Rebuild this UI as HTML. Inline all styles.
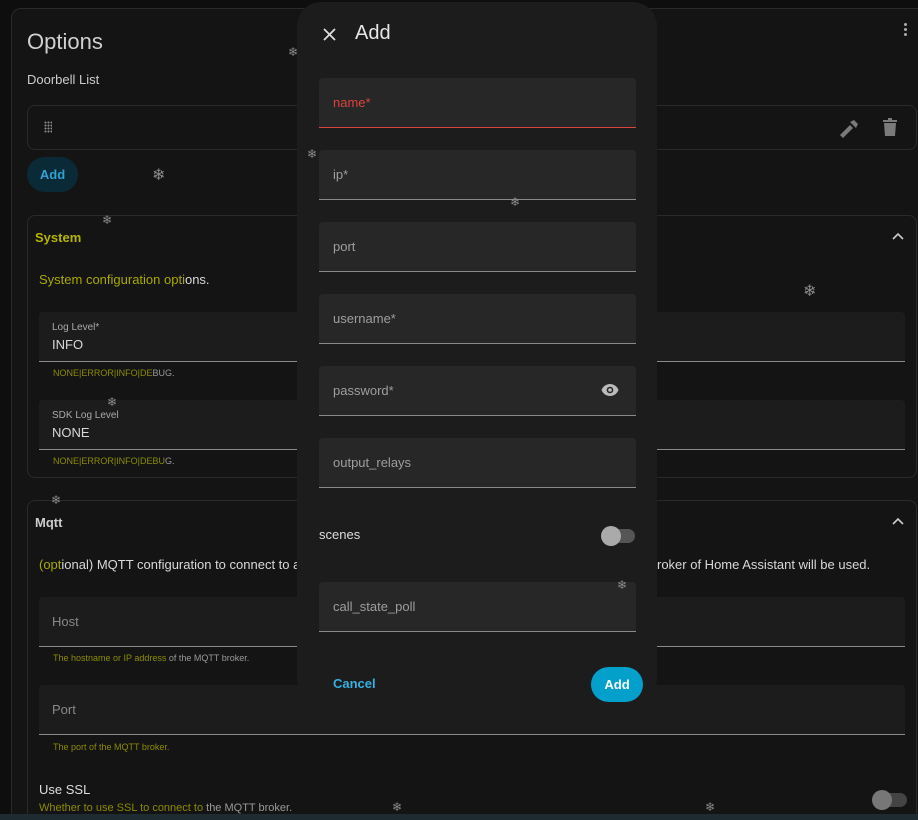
<!DOCTYPE html>
<html style="overflow:hidden;width:918px;height:820px"><head><meta charset="utf-8"><style>
*{box-sizing:border-box;margin:0;padding:0}
body{width:918px;height:820px;background:#0e0e0e;font-family:"Liberation Sans",sans-serif;position:relative;overflow:hidden;color:#d8d8d8}
.a{position:absolute}
.card{left:11px;top:8px;width:920px;height:830px;background:#141414;border:1px solid #2a2a2a;border-radius:10px}
.box{border:1px solid #2a2a2a;border-radius:8px}
.fld{background:#1c1c1c;border-bottom:1px solid #8a8a8a;border-radius:4px 4px 0 0}
.dlg{left:297px;top:2px;width:360px;height:700px;background:#1c1c1c;border-radius:24px}
.df{left:22px;width:317px;height:50px;background:#272727;border-bottom:1px solid #8a8a8a;border-radius:4px 4px 0 0}
.df span{position:absolute;left:14px;top:17px;font-size:13px;color:#9e9e9e}
.ol{color:#8b8b00}
.sn{color:#8a8a8a;font-size:12px}
</style></head><body>
<div class="a card"></div>
<div class="a" style="left:27px;top:29px;font-size:22px;color:#d0d0d0">Options</div>
<div class="a" style="left:27px;top:72px;font-size:13px;color:#ccc">Doorbell List</div>
<div class="a box" style="left:27px;top:105px;width:890px;height:45px"></div>
<div class="a" style="left:44px;top:121px;width:8px;height:12px;background:radial-gradient(circle,#888 0.8px,transparent 1.2px) 0 0/3px 3px"></div>
<svg class="a" style="left:838px;top:118px" width="22" height="20" viewBox="0 0 22 20"><path d="M2 17 L12 7 L15 10 L5 20Z M12 4 L18 10 L20 6 L16 2Z" fill="#7a7a7a"/></svg>
<svg class="a" style="left:882px;top:118px" width="16" height="18" viewBox="0 0 16 18"><path d="M1 2h14v2H1z M6 0h4v2H6z M2 5h12l-1 13H3z" fill="#7a7a7a"/></svg>
<div class="a" style="left:27px;top:157px;width:51px;height:35px;border-radius:18px;background:#0a2a38;color:#2ea3d0;font-size:13px;font-weight:bold;text-align:center;line-height:35px">Add</div>
<div class="a" style="left:904px;top:23px;width:3px;height:3px;background:#aaa;border-radius:50%;box-shadow:0 5px 0 #aaa,0 10px 0 #aaa"></div>

<div class="a box" style="left:27px;top:215px;width:890px;height:263px"></div>
<div class="a ol" style="left:35px;top:230px;font-size:13px;font-weight:bold;color:#b5b500">System</div>
<svg class="a" style="left:892px;top:232px" width="12" height="8"><path d="M1 7 L6 2 L11 7" stroke="#ccc" stroke-width="1.6" fill="none"/></svg>
<div class="a" style="left:39px;top:272px;font-size:13px"><span class="ol" style="color:#a8a800">System configuration opti</span>ons.</div>
<div class="a fld" style="left:39px;top:312px;width:866px;height:50px"></div>
<div class="a" style="left:52px;top:322px;font-size:10px;color:#aaa">Log Level*</div>
<div class="a" style="left:52px;top:337px;font-size:13px">INFO</div>
<div class="a" style="left:53px;top:368px;font-size:9px;color:#999"><span class="ol">NONE|ERROR|INFO|DE</span>BUG.</div>
<div class="a fld" style="left:39px;top:400px;width:866px;height:50px"></div>
<div class="a" style="left:52px;top:410px;font-size:10px;color:#aaa">SDK Log Level</div>
<div class="a" style="left:52px;top:425px;font-size:13px">NONE</div>
<div class="a" style="left:53px;top:456px;font-size:9px;color:#999"><span class="ol">NONE|ERROR|INFO|DEBU</span>G.</div>

<div class="a box" style="left:27px;top:500px;width:890px;height:340px"></div>
<div class="a" style="left:35px;top:515px;font-size:13px;font-weight:bold;color:#ccc">Mqtt</div>
<svg class="a" style="left:892px;top:517px" width="12" height="8"><path d="M1 7 L6 2 L11 7" stroke="#ccc" stroke-width="1.6" fill="none"/></svg>
<div class="a" style="left:39px;top:557px;font-size:13px"><span class="ol" style="color:#a8a800">(opt</span>ional) MQTT configuration to connect to an</div>
<div class="a" style="left:657px;top:557px;font-size:13px">roker of Home Assistant will be used.</div>
<div class="a fld" style="left:39px;top:597px;width:866px;height:50px"></div>
<div class="a" style="left:52px;top:614px;font-size:13px;color:#888">Host</div>
<div class="a" style="left:53px;top:653px;font-size:9px;color:#999"><span class="ol">The hostname or IP address</span> of the MQTT broker.</div>
<div class="a fld" style="left:39px;top:685px;width:866px;height:50px"></div>
<div class="a" style="left:52px;top:702px;font-size:13px;color:#888">Port</div>
<div class="a" style="left:53px;top:742px;font-size:9px;color:#8b8b00">The port of the MQTT broker.</div>
<div class="a" style="left:39px;top:782px;font-size:13px;color:#ddd">Use SSL</div>
<div class="a" style="left:39px;top:802px;font-size:11px;color:#999"><span class="ol">Whether to use SSL to connect to</span> the MQTT broker.</div>
<div class="a" style="left:877px;top:793px;width:30px;height:14px;border-radius:7px;background:#444"></div>
<div class="a" style="left:872px;top:790px;width:20px;height:20px;border-radius:50%;background:#777"></div>
<div class="a" style="left:0;top:814px;width:918px;height:6px;background:#1e2b31"></div>

<div class="a dlg">
<svg class="a" style="left:26px;top:26px" width="13" height="13"><path d="M1 1L12 12M12 1L1 12" stroke="#ddd" stroke-width="1.8"/></svg>
<div class="a" style="left:58px;top:20px;font-size:20px;color:#e6e6e6">Add</div>
<div class="a df" style="top:76px;border-bottom-color:#d9443b"><span style="color:#d9443b">name*</span></div>
<div class="a df" style="top:148px"><span>ip*</span></div>
<div class="a df" style="top:220px"><span>port</span></div>
<div class="a df" style="top:292px"><span>username*</span></div>
<div class="a df" style="top:364px"><span>password*</span>
<svg class="a" style="left:282px;top:18px" width="18" height="12" viewBox="0 0 18 12"><path d="M9 0C5 0 1.8 2.5 0.5 6C1.8 9.5 5 12 9 12S16.2 9.5 17.5 6C16.2 2.5 13 0 9 0Z" fill="#bbb"/><circle cx="9" cy="6" r="3.3" fill="#272727"/><circle cx="9" cy="6" r="1.8" fill="#bbb"/></svg></div>
<div class="a df" style="top:436px"><span>output_relays</span></div>
<div class="a" style="left:22px;top:525px;font-size:13px;color:#ddd">scenes</div>
<div class="a" style="left:308px;top:527px;width:30px;height:14px;border-radius:7px;background:#555"></div>
<div class="a" style="left:304px;top:524px;width:20px;height:20px;border-radius:50%;background:#aaa"></div>
<div class="a df" style="top:580px"><span>call_state_poll</span></div>
<div class="a" style="left:36px;top:674px;font-size:13px;font-weight:bold;color:#35b0e0">Cancel</div>
<div class="a" style="left:294px;top:665px;width:52px;height:35px;border-radius:18px;background:#03a0cc;color:#fff;font-size:13px;font-weight:bold;text-align:center;line-height:35px">Add</div>
</div>
<div class="a sn" style="left:288px;top:45px">❄</div>
<div class="a sn" style="left:152px;top:165px;font-size:16px">❄</div>
<div class="a sn" style="left:102px;top:213px">❄</div>
<div class="a sn" style="left:307px;top:147px">❄</div>
<div class="a sn" style="left:510px;top:195px">❄</div>
<div class="a sn" style="left:803px;top:281px;font-size:16px">❄</div>
<div class="a sn" style="left:107px;top:395px">❄</div>
<div class="a sn" style="left:51px;top:493px">❄</div>
<div class="a sn" style="left:617px;top:578px">❄</div>
<div class="a sn" style="left:392px;top:800px">❄</div>
<div class="a sn" style="left:705px;top:800px">❄</div>
</body></html>
